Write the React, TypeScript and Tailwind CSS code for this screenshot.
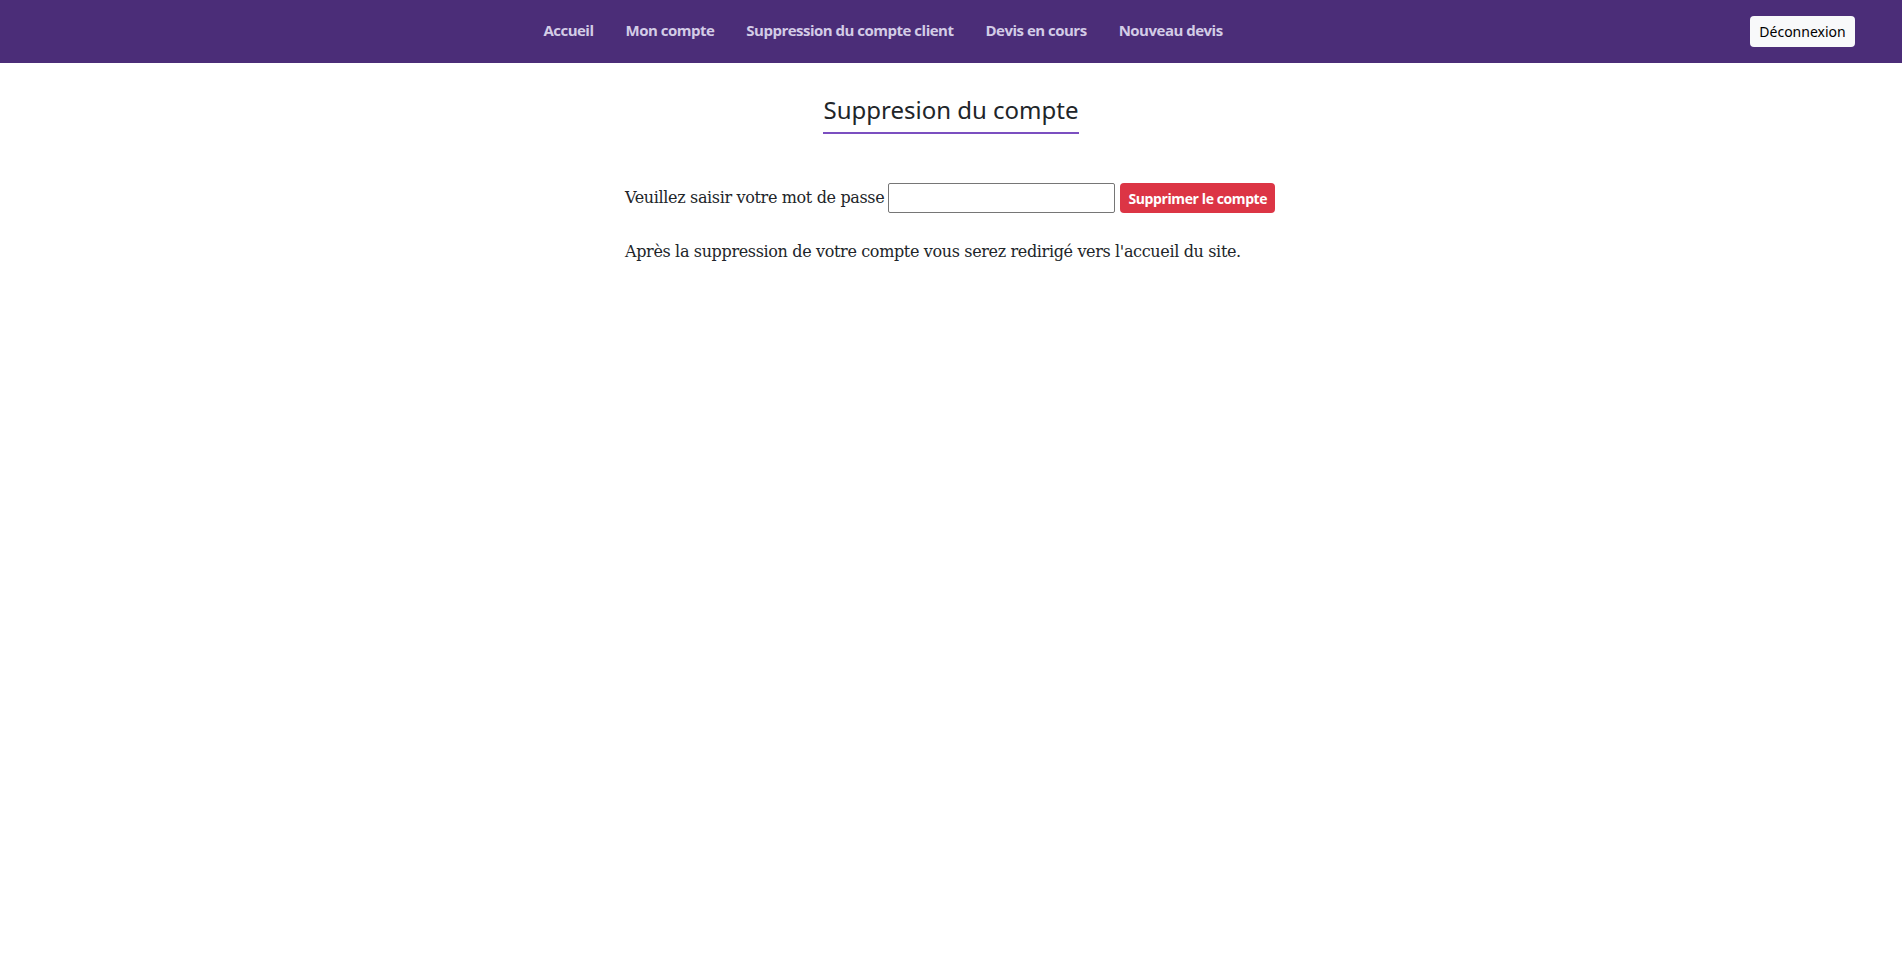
import React, { useState } from 'react';

const links = ['Accueil', 'Mon compte', 'Suppression du compte client', 'Devis en cours', 'Nouveau devis'];

const App: React.FC = () => {
  const [password, setPassword] = useState('');

  return (
    <div className="min-h-screen bg-white text-[#212529]">
      <nav className="flex h-[63px] items-center bg-[#4b2d78] px-4">
        <ul className="flex flex-1 justify-center">
          {links.map((l) => (
            <li key={l}>
              <a
                href="#"
                className="block px-4 pt-[7px] pb-[9px] text-[15px] font-bold tracking-[-0.5px] text-[#d3cce6] [font-family:'Open_Sans',sans-serif]"
              >
                {l}
              </a>
            </li>
          ))}
        </ul>
        <button
          type="button"
          className="mr-[31px] h-[31px] w-[105px] rounded bg-[#f8f9fa] text-[14px] text-black [font-family:'Noto_Sans',sans-serif]"
        >
          Déconnexion
        </button>
      </nav>

      <main className="flex flex-col items-center">
        <h1 className="mt-[29px] border-b-2 border-[#7b4fc0] pb-[4px] text-[24px] leading-[36px] text-[#212529] [font-family:'Noto_Sans',sans-serif]">
          Suppresion du compte
        </h1>

        <div className="mt-[49px] w-[652px] text-[16px] tracking-[-0.35px] [font-family:'DejaVu_Serif',serif]">
          <form className="flex items-center" onSubmit={(e) => e.preventDefault()}>
            <label htmlFor="pwd">Veuillez saisir votre mot de passe</label>
            <input
              id="pwd"
              type="password"
              value={password}
              onChange={(e) => setPassword(e.target.value)}
              className="ml-[4px] h-[30px] w-[227px] rounded-[2px] border border-[#767676]"
            />
            <button
              type="submit"
              className="ml-[5px] h-[30px] w-[155px] whitespace-nowrap rounded bg-[#dc3545] text-[14px] font-bold tracking-[-0.4px] text-white [font-family:'Open_Sans',sans-serif]"
            >
              Supprimer le compte
            </button>
          </form>
          <p className="mt-[27px]">
            Après la suppression de votre compte vous serez redirigé vers l'accueil du site.
          </p>
        </div>
      </main>
    </div>
  );
};

export default App;
